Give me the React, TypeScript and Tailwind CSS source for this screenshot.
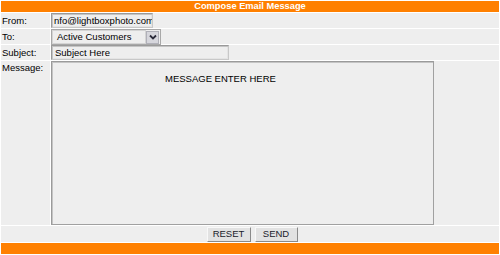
import React from "react";

const inputCls =
  "h-full bg-[#eeeeee] border border-t-[#9a9a9a] border-l-[#9a9a9a] border-r-[#c8c8c8] border-b-[#c8c8c8] shadow-[inset_1px_1px_0_#c4c4c4,inset_-1px_-1px_0_#e4e4e4] text-[9.5px] text-black leading-none flex items-center overflow-hidden whitespace-nowrap";

const btnCls =
  "h-[15px] bg-[#e2e2e2] border border-t-[#f8f8f8] border-l-[#f8f8f8] border-r-[#8a8a8a] border-b-[#8a8a8a] text-[9.5px] leading-none text-[#1a1a2a] flex items-center justify-center";

export default function App() {
  return (
    <div className="w-[500px] h-[255px] bg-white pt-px px-px flex flex-col gap-px font-['Liberation_Sans',Arial,sans-serif] text-[9.5px] text-black">
      <div className="h-[11px] bg-[#ff8000] text-white font-bold text-[9.3px] flex items-center justify-center leading-none">
        Compose Email Message
      </div>
      <div className="h-[15px] flex gap-px">
        <div className="w-[49px] bg-[#eeeeee] pl-px flex items-center leading-none">From:</div>
        <div className="flex-1 bg-[#eeeeee]">
          <div className={inputCls + " w-[102px] h-[16px] pl-[2px]"}>nfo@lightboxphoto.com</div>
        </div>
      </div>
      <div className="h-[15px] flex gap-px">
        <div className="w-[49px] bg-[#eeeeee] pl-px flex items-center leading-none">To:</div>
        <div className="flex-1 bg-[#eeeeee]">
          <div className="w-[110px] h-[16px] bg-[#eeeeee] border border-[#a8a8a8] flex items-center">
            <div className="flex-1 h-full border border-[#d4d4d4] pl-[4px] flex items-center leading-none">Active Customers</div>
            <div className="w-[13px] h-[13px] mr-px bg-[#d6d6dc] border border-[#b0b0b8] flex items-center justify-center">
              <svg width="8" height="6" viewBox="0 0 8 6">
                <path d="M1 1.5 L4 4.5 L7 1.5" stroke="#2a2a3a" strokeWidth="1.8" fill="none" />
              </svg>
            </div>
          </div>
        </div>
      </div>
      <div className="h-[15px] flex gap-px">
        <div className="w-[49px] bg-[#eeeeee] pl-px flex items-center leading-none">Subject:</div>
        <div className="flex-1 bg-[#eeeeee]">
          <div className={inputCls + " w-[178px] pl-[3px]"}>Subject Here</div>
        </div>
      </div>
      <div className="h-[164px] flex gap-px">
        <div className="w-[49px] bg-[#eeeeee] pl-px pt-[2px] leading-none">Message:</div>
        <div className="flex-1 bg-[#eeeeee]">
          <div className="w-[383px] h-[164px] bg-[#eeeeee] border border-t-[#9a9a9a] border-l-[#9a9a9a] border-r-[#a0a0a0] border-b-[#a0a0a0] shadow-[inset_1px_1px_0_#c4c4c4] pt-[12px] pl-[113px] leading-none">
            MESSAGE ENTER HERE
          </div>
        </div>
      </div>
      <div className="h-[16px] bg-[#eeeeee] flex items-center justify-center gap-[4px] pl-[4px]">
        <div className={btnCls + " w-[44px]"}>RESET</div>
        <div className={btnCls + " w-[43px]"}>SEND</div>
      </div>
      <div className="h-[11px] bg-[#ff8000]" />
    </div>
  );
}
